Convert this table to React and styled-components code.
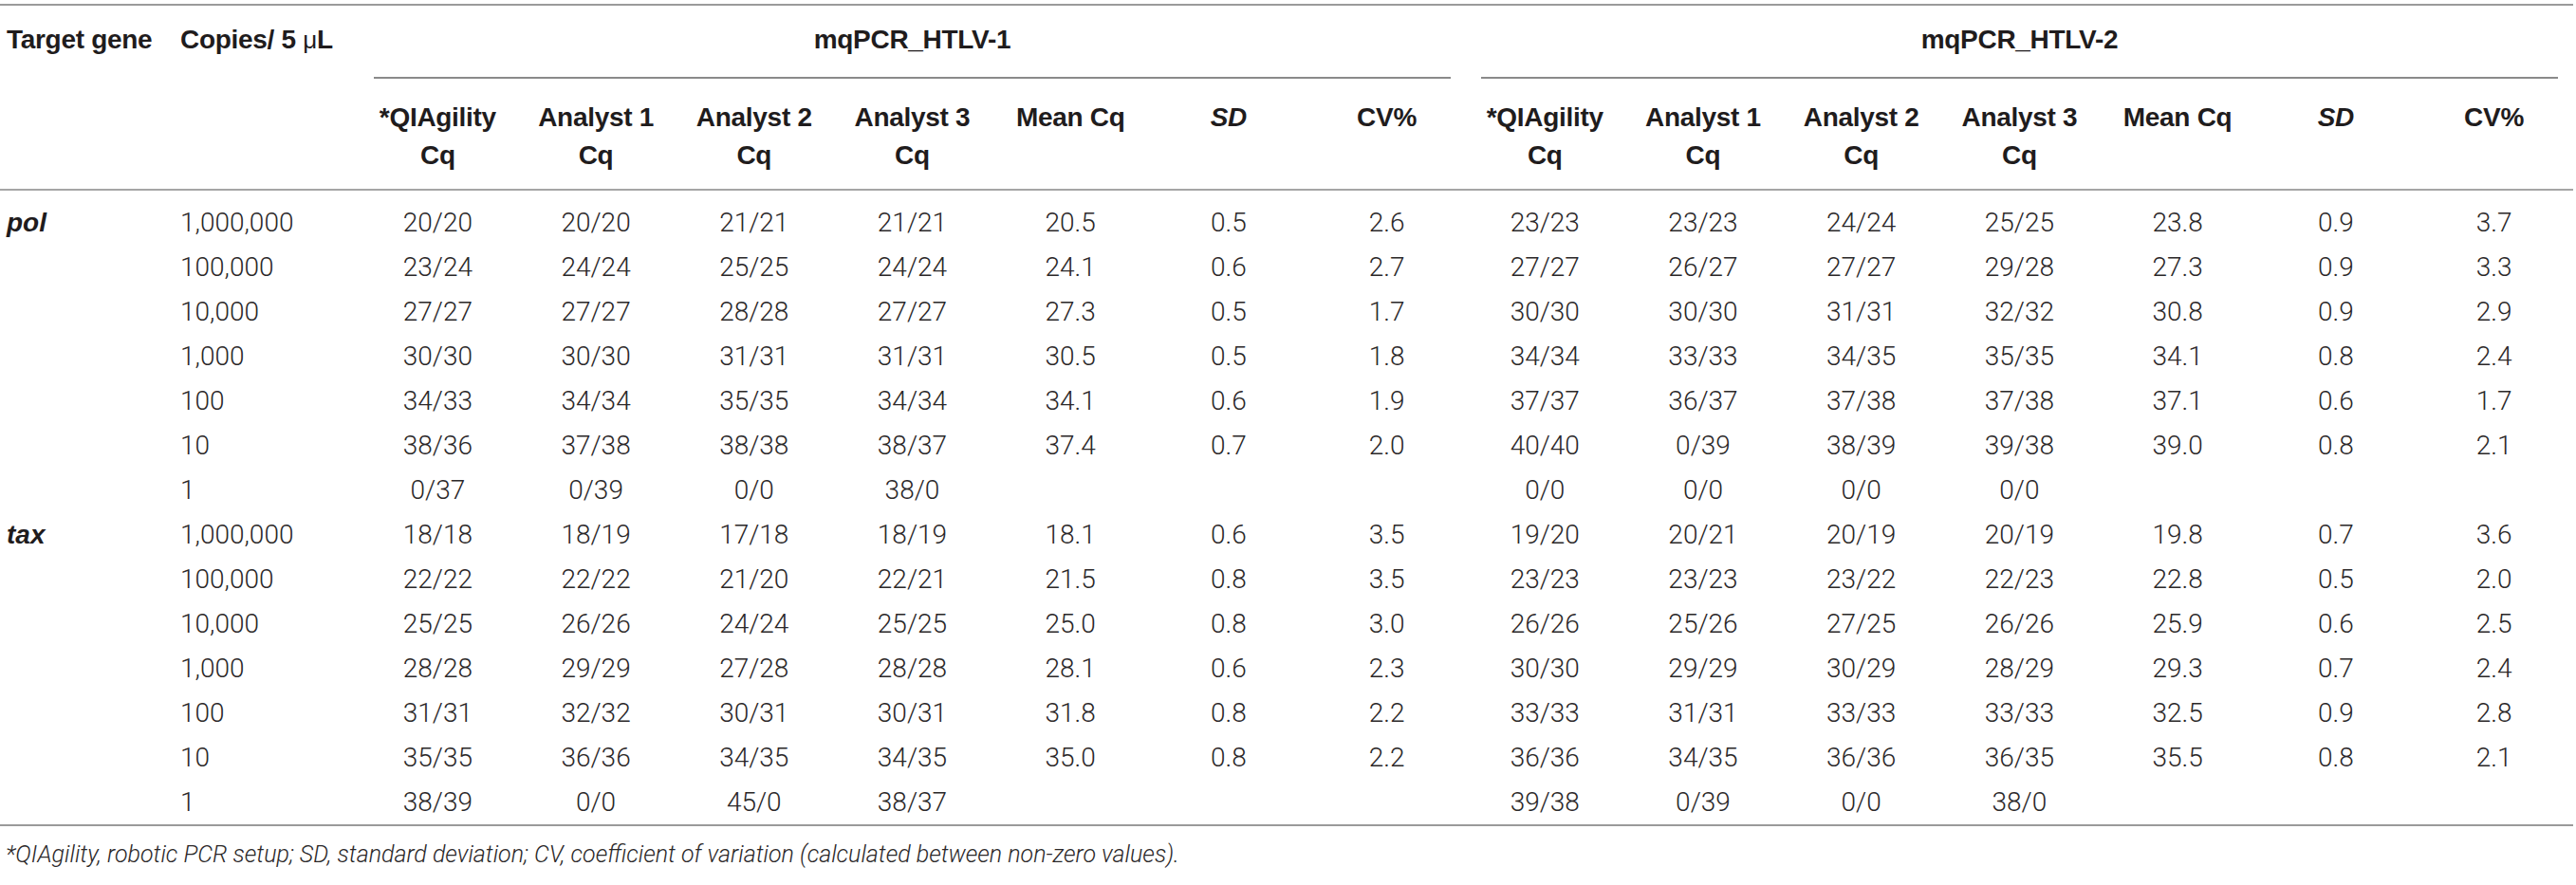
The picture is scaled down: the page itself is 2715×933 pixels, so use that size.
import styled, { createGlobalStyle } from "styled-components";

const GlobalStyle = createGlobalStyle`
  body {
    margin: 0;
    background: #fff;
    color: #231f20;
    font-family: "Liberation Sans", Arial, sans-serif;
  }
`;

const GROUPS = ["mqPCR_HTLV-1", "mqPCR_HTLV-2"];

const SUB_HEADS = [
  { label: "*QIAgility", second: "Cq" },
  { label: "Analyst 1", second: "Cq" },
  { label: "Analyst 2", second: "Cq" },
  { label: "Analyst 3", second: "Cq" },
  { label: "Mean Cq" },
  { label: "SD", italic: true },
  { label: "CV%" },
];

const DATA = [
  {
    gene: "pol",
    rows: [
      ["1,000,000", "20/20 20/20 21/21 21/21 20.5 0.5 2.6", "23/23 23/23 24/24 25/25 23.8 0.9 3.7"],
      ["100,000", "23/24 24/24 25/25 24/24 24.1 0.6 2.7", "27/27 26/27 27/27 29/28 27.3 0.9 3.3"],
      ["10,000", "27/27 27/27 28/28 27/27 27.3 0.5 1.7", "30/30 30/30 31/31 32/32 30.8 0.9 2.9"],
      ["1,000", "30/30 30/30 31/31 31/31 30.5 0.5 1.8", "34/34 33/33 34/35 35/35 34.1 0.8 2.4"],
      ["100", "34/33 34/34 35/35 34/34 34.1 0.6 1.9", "37/37 36/37 37/38 37/38 37.1 0.6 1.7"],
      ["10", "38/36 37/38 38/38 38/37 37.4 0.7 2.0", "40/40 0/39 38/39 39/38 39.0 0.8 2.1"],
      ["1", "0/37 0/39 0/0 38/0", "0/0 0/0 0/0 0/0"],
    ],
  },
  {
    gene: "tax",
    rows: [
      ["1,000,000", "18/18 18/19 17/18 18/19 18.1 0.6 3.5", "19/20 20/21 20/19 20/19 19.8 0.7 3.6"],
      ["100,000", "22/22 22/22 21/20 22/21 21.5 0.8 3.5", "23/23 23/23 23/22 22/23 22.8 0.5 2.0"],
      ["10,000", "25/25 26/26 24/24 25/25 25.0 0.8 3.0", "26/26 25/26 27/25 26/26 25.9 0.6 2.5"],
      ["1,000", "28/28 29/29 27/28 28/28 28.1 0.6 2.3", "30/30 29/29 30/29 28/29 29.3 0.7 2.4"],
      ["100", "31/31 32/32 30/31 30/31 31.8 0.8 2.2", "33/33 31/31 33/33 33/33 32.5 0.9 2.8"],
      ["10", "35/35 36/36 34/35 34/35 35.0 0.8 2.2", "36/36 34/35 36/36 36/35 35.5 0.8 2.1"],
      ["1", "38/39 0/0 45/0 38/37", "39/38 0/39 0/0 38/0"],
    ],
  },
];

const toCells = (text) => {
  const cells = text.split(" ");
  while (cells.length < 7) cells.push("");
  return cells;
};

export default function App() {
  return (
    <Page>
      <GlobalStyle />
      <Table>
        <colgroup>
          <col style={{ width: 183 }} />
          <col style={{ width: 195 }} />
          {Array.from({ length: 14 }).map((_, i) => (
            <col key={i} />
          ))}
        </colgroup>
        <thead>
          <tr>
            <CornerHead rowSpan={2}>Target gene</CornerHead>
            <CornerHead rowSpan={2}>
              Copies/ 5 <Micro>μ</Micro>L
            </CornerHead>
            {GROUPS.map((g) => (
              <GroupHead key={g} colSpan={7}>
                <GroupLabel>{g}</GroupLabel>
              </GroupHead>
            ))}
          </tr>
          <tr>
            {GROUPS.map((g) =>
              SUB_HEADS.map((h) => (
                <SubHead key={g + h.label} $italic={h.italic}>
                  {h.label}
                  {h.second && (
                    <>
                      <br />
                      {h.second}
                    </>
                  )}
                </SubHead>
              ))
            )}
          </tr>
        </thead>
        <tbody>
          {DATA.map((block, bi) =>
            block.rows.map(([copies, a, b], ri) => (
              <BodyRow key={block.gene + copies} $first={bi === 0 && ri === 0}>
                <GeneCell>{ri === 0 ? block.gene : ""}</GeneCell>
                <CopiesCell>{copies}</CopiesCell>
                {[...toCells(a), ...toCells(b)].map((v, ci) => (
                  <ValueCell key={ci}>{v}</ValueCell>
                ))}
              </BodyRow>
            ))
          )}
        </tbody>
      </Table>
      <Footnote>
        *QIAgility, robotic PCR setup; SD, standard deviation; CV, coefficient of
        variation (calculated between non-zero values).
      </Footnote>
    </Page>
  );
}

const Page = styled.div`
  padding-top: 4px;
  width: 2712px;
`;

const Table = styled.table`
  width: 2712px;
  table-layout: fixed;
  border-collapse: collapse;
  border-top: 2px solid #9a9a9a;
  border-bottom: 2px solid #9a9a9a;

  thead {
    border-bottom: 2px solid #a5a5a5;
  }
`;

const HeadBase = styled.th`
  font-family: "Liberation Sans", Arial, sans-serif;
  font-weight: 700;
  font-size: 28px;
  line-height: 40px;
  color: #1f1c1d;
  vertical-align: top;
  letter-spacing: -0.3px;
`;

const CornerHead = styled(HeadBase)`
  text-align: left;
  padding: 16px 0 0 7px;
  white-space: nowrap;
`;

const Micro = styled.span`
  font-weight: 400;
  font-size: 26px;
`;

const GroupHead = styled(HeadBase)`
  text-align: center;
  padding: 16px 16px 0;
`;

const GroupLabel = styled.div`
  padding-bottom: 19px;
  border-bottom: 2px solid #8a8a8a;
`;

const SubHead = styled(HeadBase)`
  text-align: center;
  padding: 21px 0 15px;
  white-space: nowrap;
  font-style: ${(p) => (p.$italic ? "italic" : "normal")};
`;

const BodyRow = styled.tr`
  td {
    height: 47px;
    padding: ${(p) => (p.$first ? "10px" : "0")} 0 0;
    line-height: 47px;
    vertical-align: top;
    font-size: 28px;
    white-space: nowrap;
  }
`;

const GeneCell = styled.td`
  font-family: "Liberation Sans", Arial, sans-serif;
  font-weight: 700;
  font-style: italic;
  padding-left: 7px !important;
  color: #1f1c1d;
`;

const CopiesCell = styled.td`
  font-family: Roboto, "Liberation Sans", sans-serif;
  font-weight: 300;
  padding-left: 7px !important;
  color: #2b2829;
`;

const ValueCell = styled.td`
  font-family: Roboto, "Liberation Sans", sans-serif;
  font-weight: 300;
  text-align: center;
  color: #2b2829;
`;

const Footnote = styled.p`
  margin: 15px 0 0 6px;
  font-family: Roboto, "Liberation Sans", sans-serif;
  font-weight: 300;
  font-style: italic;
  font-size: 25px;
  line-height: 30px;
  color: #2b2829;
`;
